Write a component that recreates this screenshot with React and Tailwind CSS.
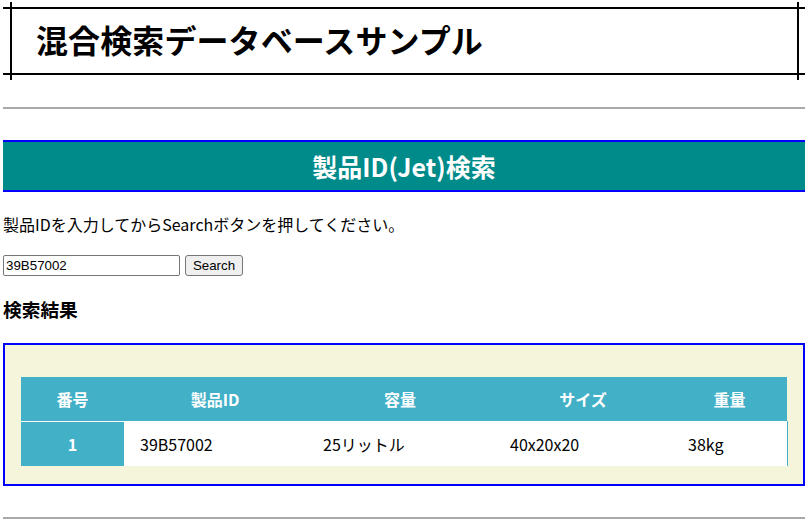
export default function App() {
  const font = { fontFamily: '"Noto Sans CJK JP", "Noto Sans", sans-serif' };
  return (
    <div className="min-h-[523px] bg-white text-black px-[3px] pr-[4px] pb-[4px] overflow-hidden" style={font}>
      {/* Title box */}
      <div className="relative mt-[7px] h-[68px] border-y-2 border-black flex items-center pl-[33px] pb-[4px]">
        <span className="absolute left-[7px] top-[-7px] bottom-[-7px] w-[2px] bg-black" />
        <span className="absolute right-[6px] top-[-7px] bottom-[-7px] w-[2px] bg-black" />
        <h1 className="text-[32px] leading-[40px] font-bold tracking-[0.1px]">混合検索データベースサンプル</h1>
      </div>

      <div className="mt-[32px] h-[2px] bg-[#a9a9a9]" />

      {/* Section bar */}
      <div className="mt-[31px] h-[52px] border-y-2 border-[#0000ff] bg-[#008b8b] flex items-center justify-center">
        <h2 className="text-[25px] leading-[30px] font-bold text-white">製品ID(Jet)検索</h2>
      </div>

      <p className="mt-[20px] text-[16px] leading-[24px]">製品IDを入力してからSearchボタンを押してください。</p>

      <div className="mt-[19px] flex items-center gap-[5px]" style={{ fontFamily: '"Liberation Sans", Arial, sans-serif' }}>
        <input
          className="w-[177px] h-[21px] border border-[#767676] rounded-[2px] px-[2px] text-[13.33px] leading-[16px] outline-none"
          defaultValue="39B57002"
        />
        <button className="w-[58px] h-[21px] border border-[#767676] rounded-[3px] bg-[#efefef] text-[13.33px] leading-[16px]">
          Search
        </button>
      </div>

      <h3 className="mt-[20px] text-[18.72px] leading-[26px] font-bold">検索結果</h3>

      {/* Result box */}
      <div className="mt-[21px] border-2 border-[#0000ff] bg-[#f5f5dc] pt-[32px] pb-[18px] px-[16px]">
        <table className="w-full table-fixed border-collapse text-[16px]">
          <colgroup>
            <col className="w-[103px]" />
            <col className="w-[182px]" />
            <col className="w-[188px]" />
            <col className="w-[178px]" />
            <col className="w-[115px]" />
          </colgroup>
          <thead>
            <tr className="h-[44px] bg-[#42b0c7] text-white font-bold">
              <th className="text-center font-bold">番号</th>
              <th className="text-center font-bold">製品ID</th>
              <th className="text-center font-bold">容量</th>
              <th className="text-center font-bold">サイズ</th>
              <th className="text-center font-bold">重量</th>
            </tr>
          </thead>
          <tbody>
            <tr className="h-[45px] border-t border-white">
              <td className="bg-[#42b0c7] text-white font-bold text-center">1</td>
              <td className="bg-white pl-[16px]">39B57002</td>
              <td className="bg-white pl-[17px]">25リットル</td>
              <td className="bg-white pl-[16px]">40x20x20</td>
              <td className="bg-white pl-[16px] border-r border-[#42b0c7]">38kg</td>
            </tr>
          </tbody>
        </table>
      </div>

      <div className="mt-[31px] h-[2px] bg-[#a9a9a9]" />
    </div>
  );
}
